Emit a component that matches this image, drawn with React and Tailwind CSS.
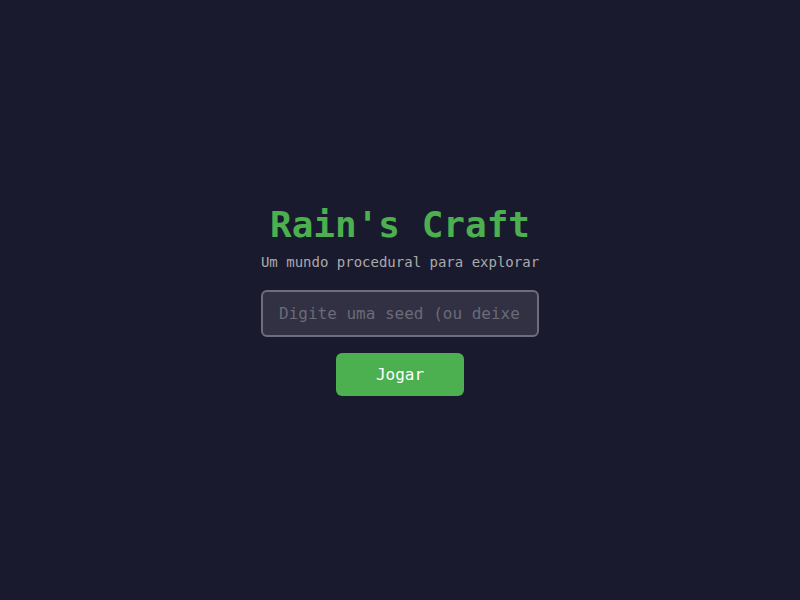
export default function App() {
  return (
    <div
      className="w-full h-screen bg-[#1a1a2e] flex flex-col items-center justify-center"
      style={{ fontFamily: '"DejaVu Sans Mono", monospace' }}
    >
      <h1 className="text-[36px] leading-[42px] font-bold text-[#4caf50] mb-2">Rain's Craft</h1>
      <p className="text-[14px] leading-[16px] text-[#aaaaaa] mb-5">Um mundo procedural para explorar</p>
      <input
        type="text"
        placeholder="Digite uma seed (ou deixe vazio)"
        className="w-[278px] px-4 py-3 text-[16px] leading-[19px] text-white bg-white/10 border-2 border-[#6e6d7e] rounded-md outline-none placeholder:text-[#6a6a78]"
      />
      <button className="mt-4 px-10 py-3 text-[16px] leading-[19px] text-white bg-[#4caf50] rounded-md">
        Jogar
      </button>
    </div>
  );
}
